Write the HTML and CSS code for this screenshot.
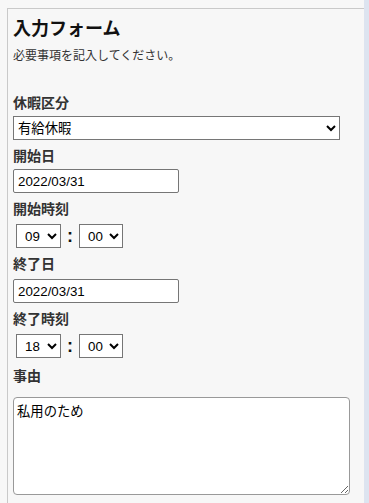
FILE: index.html
```html
<!DOCTYPE html>
<html lang="ja">
<head>
<meta charset="utf-8">
<title>入力フォーム</title>
<link rel="stylesheet" href="styles.css">
</head>
<body>
<div class="main">
  <div class="panel">
    <h1 class="title">入力フォーム</h1>
    <p class="lead">必要事項を記入してください。</p>

    <label class="label label-first">休暇区分</label>
    <select class="ctl select-wide">
      <option>有給休暇</option>
    </select>

    <label class="label">開始日</label>
    <input class="ctl input-date" type="text" value="2022/03/31">

    <label class="label">開始時刻</label>
    <div class="time-row">
      <select class="ctl select-time"><option>09</option></select>
      <span class="colon">:</span>
      <select class="ctl select-time select-min"><option>00</option></select>
    </div>

    <label class="label">終了日</label>
    <input class="ctl input-date input-end" type="text" value="2022/03/31">

    <label class="label">終了時刻</label>
    <div class="time-row">
      <select class="ctl select-time"><option>18</option></select>
      <span class="colon">:</span>
      <select class="ctl select-time select-min"><option>00</option></select>
    </div>

    <label class="label label-reason">事由</label>
    <textarea class="ctl memo">私用のため</textarea>
  </div>
</div>
<div class="strip"></div>
</body>
</html>
```

FILE: styles.css
```css
html, body {
  height: 100%;
  overflow: hidden;
}
body {
  margin: 0;
  display: flex;
  font-family: "Noto Sans CJK JP", "Noto Sans", sans-serif;
  color: #333;
}
.main {
  flex: 1;
  background: #f7f7f7;
  padding: 8px 0 0 7px;
}
.strip {
  width: 5px;
  background: #dde4f0;
}
.panel {
  border-top: 1px solid #c9c9c9;
  border-left: 1px solid #c9c9c9;
  height: 100%;
  padding: 6px 0 0 5px;
  box-sizing: border-box;
}
.title {
  margin: 0;
  font-size: 18px;
  line-height: 24px;
  font-weight: bold;
  color: #111;
}
.lead {
  margin: 7px 0 0;
  font-size: 12px;
  line-height: 18px;
  color: #333;
}
.label {
  display: block;
  font-size: 14px;
  line-height: 20px;
  font-weight: bold;
  color: #333;
  margin-top: 5px;
}
.label-first {
  margin-top: 28px;
}
.label-reason {
  margin-top: 7px;
}
.ctl {
  display: block;
  box-sizing: border-box;
  font-family: "Liberation Sans", "Noto Sans CJK JP", sans-serif;
  font-size: 13.333px;
  color: #000;
  background: #fff;
  margin: 4px 0 0;
}
.select-wide {
  width: 327px;
  height: 24px;
}
.input-date {
  width: 166px;
  height: 24px;
  border: 1px solid #767676;
  border-radius: 2px;
  padding: 1px 4px;
}
.input-end {
  margin-top: 6px;
}
.time-row {
  display: flex;
  align-items: center;
  margin-top: 6px;
  padding-left: 3px;
}
.select-time {
  width: 45px;
  height: 24px;
  margin: 0;
  padding-left: 4px;
}
.select-min {
  width: 44px;
}
.colon {
  width: 18px;
  text-align: center;
  font-family: "Liberation Sans", sans-serif;
  font-size: 18px;
  font-weight: bold;
  color: #111;
  line-height: 20px;
}
.memo {
  width: 337px;
  height: 98px;
  margin-top: 12px;
  border: 1px solid #999;
  border-radius: 4px;
  padding: 3px;
  resize: both;
}
```
